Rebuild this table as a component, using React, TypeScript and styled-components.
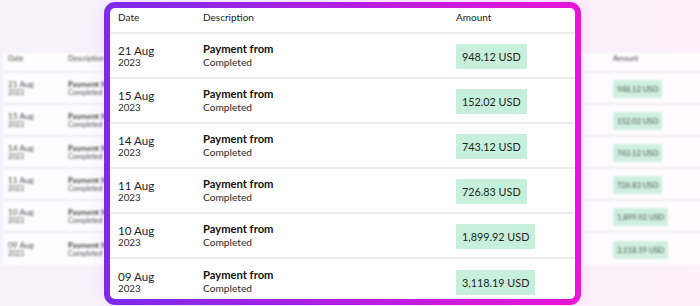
import React from "react";
import styled, { createGlobalStyle } from "styled-components";

interface Txn {
  day: string;
  year: string;
  amount: string;
}

interface Metrics {
  padX: number;
  dateCol: number;
  descCol: number;
  headH: number;
  rowH: number;
  line: number;
  headFont: number;
  dateFont: number;
  yearFont: number;
  descFont: number;
  statusFont: number;
  amountFont: number;
  badgeH: number;
  badgePad: number;
}

// row heights include the bottom rule
const front: Metrics = {
  padX: 8,
  dateCol: 85,
  descCol: 253,
  headH: 26,
  rowH: 45,
  line: 2,
  headFont: 10,
  dateFont: 11.6,
  yearFont: 9.8,
  descFont: 11.2,
  statusFont: 10.2,
  amountFont: 10.8,
  badgeH: 25,
  badgePad: 6,
};

const back: Metrics = {
  padX: 5,
  dateCol: 60,
  descCol: 545,
  headH: 20,
  rowH: 32,
  line: 2,
  headFont: 7.2,
  dateFont: 8.3,
  yearFont: 6.9,
  descFont: 7.9,
  statusFont: 7.2,
  amountFont: 7.6,
  badgeH: 18,
  badgePad: 4,
};

const txns: Txn[] = [
  { day: "21 Aug", year: "2023", amount: "948.12 USD" },
  { day: "15 Aug", year: "2023", amount: "152.02 USD" },
  { day: "14 Aug", year: "2023", amount: "743.12 USD" },
  { day: "11 Aug", year: "2023", amount: "726.83 USD" },
  { day: "10 Aug", year: "2023", amount: "1,899.92 USD" },
  { day: "09 Aug", year: "2023", amount: "3,118.19 USD" },
];

const GlobalStyle = createGlobalStyle`
  html, body {
    margin: 0;
    padding: 0;
    background: #f7f2fb;
  }
  body {
    font-family: Lato, "Open Sans", sans-serif;
  }
`;

const Stage = styled.div`
  width: 700px;
  height: 306px;
  overflow: hidden;
  display: grid;
  grid-template-areas: "stack";
  background: linear-gradient(90deg, #f6f2fb 0%, #f9f1fb 50%, #fdeffc 100%);
`;

const Backdrop = styled.div`
  grid-area: stack;
  padding: 53px 0 0 3px;
  filter: blur(1.3px);
  opacity: 0.82;
`;

const Spotlight = styled.div`
  grid-area: stack;
  align-self: start;
  position: relative;
  z-index: 1;
  margin: 2px 0 0 104px;
  width: 477px;
  height: 303px;
  box-sizing: border-box;
  padding: 6px;
  border-radius: 11px;
  background: linear-gradient(90deg, #7b2be8 0%, #b31fe0 50%, #e915d6 100%);
  box-shadow: 0 0 14px rgba(225, 40, 220, 0.12);
`;

const Card = styled.div`
  height: 100%;
  background: #ffffff;
  border-radius: 5px;
  overflow: hidden;
`;

const Table = styled.div<{ $width?: number }>`
  width: ${(p) => (p.$width ? `${p.$width}px` : "auto")};
  background: #ffffff;
  color: #1d1d1f;
`;

const Row = styled.div<{ $m: Metrics; $head?: boolean }>`
  display: grid;
  grid-template-columns: ${(p) => p.$m.dateCol}px ${(p) => p.$m.descCol}px 1fr;
  align-items: ${(p) => (p.$head ? "start" : "center")};
  height: ${(p) => (p.$head ? p.$m.headH : p.$m.rowH)}px;
  padding: ${(p) => (p.$head ? "0" : "1px")} ${(p) => p.$m.padX}px 0;
  box-sizing: border-box;
  border-bottom: ${(p) => p.$m.line}px solid #ececec;
  &:last-child {
    border-bottom: none;
  }
`;

const HeadCell = styled.div<{ $m: Metrics }>`
  font-size: ${(p) => p.$m.headFont}px;
  line-height: ${(p) => p.$m.headH - 8}px;
  color: #222;
`;

const Stack = styled.div`
  display: flex;
  flex-direction: column;
`;

const DateText = styled.span<{ $m: Metrics }>`
  font-size: ${(p) => p.$m.dateFont}px;
  line-height: 1.15;
  color: #1d1d1f;
`;

const YearText = styled.span<{ $m: Metrics }>`
  font-size: ${(p) => p.$m.yearFont}px;
  line-height: 1.15;
  color: #2a2a2a;
`;

const DescText = styled.span<{ $m: Metrics }>`
  font-size: ${(p) => p.$m.descFont}px;
  font-weight: 700;
  line-height: 1.15;
  color: #111;
`;

const StatusText = styled.span<{ $m: Metrics }>`
  font-size: ${(p) => p.$m.statusFont}px;
  line-height: 1.2;
  color: #2a2a2a;
`;

const Badge = styled.span<{ $m: Metrics }>`
  justify-self: start;
  display: inline-flex;
  align-items: center;
  height: ${(p) => p.$m.badgeH}px;
  padding: 0 ${(p) => p.$m.badgePad}px;
  border-radius: 1px;
  background: #c7f0dc;
  color: #1c2621;
  font-size: ${(p) => p.$m.amountFont}px;
`;

const TransactionTable: React.FC<{ m: Metrics; width?: number }> = ({ m, width }) => (
  <Table $width={width}>
    <Row $m={m} $head>
      <HeadCell $m={m}>Date</HeadCell>
      <HeadCell $m={m}>Description</HeadCell>
      <HeadCell $m={m}>Amount</HeadCell>
    </Row>
    {txns.map((t) => (
      <Row $m={m} key={t.day}>
        <Stack>
          <DateText $m={m}>{t.day}</DateText>
          <YearText $m={m}>{t.year}</YearText>
        </Stack>
        <Stack>
          <DescText $m={m}>Payment from</DescText>
          <StatusText $m={m}>Completed</StatusText>
        </Stack>
        <Badge $m={m}>{t.amount}</Badge>
      </Row>
    ))}
  </Table>
);

const App: React.FC = () => (
  <>
    <GlobalStyle />
    <Stage>
      <Backdrop>
        <TransactionTable m={back} width={740} />
      </Backdrop>
      <Spotlight>
        <Card>
          <TransactionTable m={front} />
        </Card>
      </Spotlight>
    </Stage>
  </>
);

export default App;
